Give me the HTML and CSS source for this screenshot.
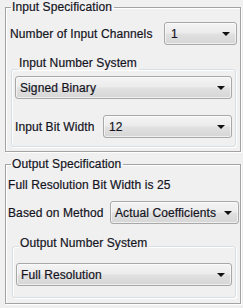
FILE: index.html
```html
<!DOCTYPE html>
<html>
<head>
<meta charset="utf-8">
<link rel="stylesheet" href="styles.css">
</head>
<body>
  <fieldset class="panel panel-input">
    <legend class="panel-title">Input Specification</legend>
    <div class="row row-channels">
      <span class="label">Number of Input Channels</span>
      <div class="combo combo-channels"><span class="combo-text">1</span><span class="arrow"></span></div>
    </div>
    <div class="group group-input">
      <div class="group-title">Input Number System</div>
      <div class="group-body body-input">
        <div class="combo combo-wide"><span class="combo-text">Signed Binary</span><span class="arrow"></span></div>
        <div class="row row-bitwidth">
          <span class="label">Input Bit Width</span>
          <div class="combo combo-bitwidth"><span class="combo-text">12</span><span class="arrow"></span></div>
        </div>
      </div>
    </div>
  </fieldset>

  <fieldset class="panel panel-output">
    <legend class="panel-title">Output Specification</legend>
    <div class="info">Full Resolution Bit Width is 25</div>
    <div class="row row-method">
      <span class="label">Based on Method</span>
      <div class="combo combo-method"><span class="combo-text">Actual Coefficients</span><span class="arrow"></span></div>
    </div>
    <div class="group group-output">
      <div class="group-title">Output Number System</div>
      <div class="group-body body-output">
        <div class="combo combo-wide"><span class="combo-text">Full Resolution</span><span class="arrow"></span></div>
      </div>
    </div>
  </fieldset>
</body>
</html>
```

FILE: styles.css
```css
html, body {
  margin: 0;
  padding: 0;
  background: #f0f0f0;
}
body {
  width: 243px;
  height: 308px;
  overflow: hidden;
  font-family: "Liberation Sans", Arial, sans-serif;
  font-size: 12px;
  line-height: 14px;
  color: #14141e;
  letter-spacing: 0.1px;
  -webkit-text-stroke: 0.2px #14141e;
}

.panel {
  margin: 0 2px 0 5px;
  padding: 0;
  border: 1px solid #a3a3a3;
  box-shadow: inset 1px 1px 0 #ffffff, 1px 1px 0 #ffffff;
  min-width: 0;
}
.panel-title {
  margin-left: 5px;
  padding: 0 2px 0 1px;
  line-height: 14px;
}
.panel-input {
  padding-bottom: 4px;
}
.panel-output {
  margin-top: 5px;
  padding-bottom: 5px;
}

.row {
  display: flex;
  align-items: center;
}
.row-channels {
  margin-top: 8px;
  padding: 0 3px 0 4px;
  justify-content: space-between;
}
.row-bitwidth {
  margin-top: 16px;
  justify-content: space-between;
}
.row-method {
  margin-top: 9px;
  padding: 0 1px 0 2px;
  justify-content: space-between;
}
.info {
  margin-top: 7px;
  padding-left: 2px;
}

.group {
  display: flex;
  flex-direction: column;
}
.group-input {
  margin: 11px 4px 0 5px;
}
.group-output {
  margin: 12px 4px 0 6px;
}
.group-title {
  position: relative;
  z-index: 1;
  align-self: flex-start;
  margin-left: 7px;
  padding: 0 2px 0 1px;
  background: #f0f0f0;
}
.group-body {
  border: 1px solid #d5dfe5;
  border-radius: 3px;
  box-shadow: inset 1px 1px 0 #ffffff, 1px 1px 0 #ffffff;
}
.body-input {
  margin-top: -1px;
  padding: 6px 3px 8px 3px;
}
.body-output {
  margin-top: -4px;
  padding: 16px 3px 11px 3px;
}

.combo {
  box-sizing: border-box;
  height: 23px;
  display: flex;
  align-items: center;
  justify-content: space-between;
  padding: 0 6px 0 4px;
  border: 1px solid #a8a8a8;
  border-radius: 3px;
  background: linear-gradient(#f4f4f4 0%, #ececec 45%, #e0e0e0 55%, #d6d6d6 100%);
  box-shadow: inset 0 0 0 1px rgba(255,255,255,0.6);
}
.combo-text {
  white-space: nowrap;
}
.arrow {
  width: 0;
  height: 0;
  border-left: 4px solid transparent;
  border-right: 4px solid transparent;
  border-top: 4px solid #111111;
  margin-top: 1px;
}
.combo-channels {
  width: 73px;
  padding-left: 6px;
}
.combo-wide {
  width: 100%;
}
.combo-bitwidth {
  width: 129px;
  padding-left: 5px;
}
.combo-method {
  width: 129px;
}
```
